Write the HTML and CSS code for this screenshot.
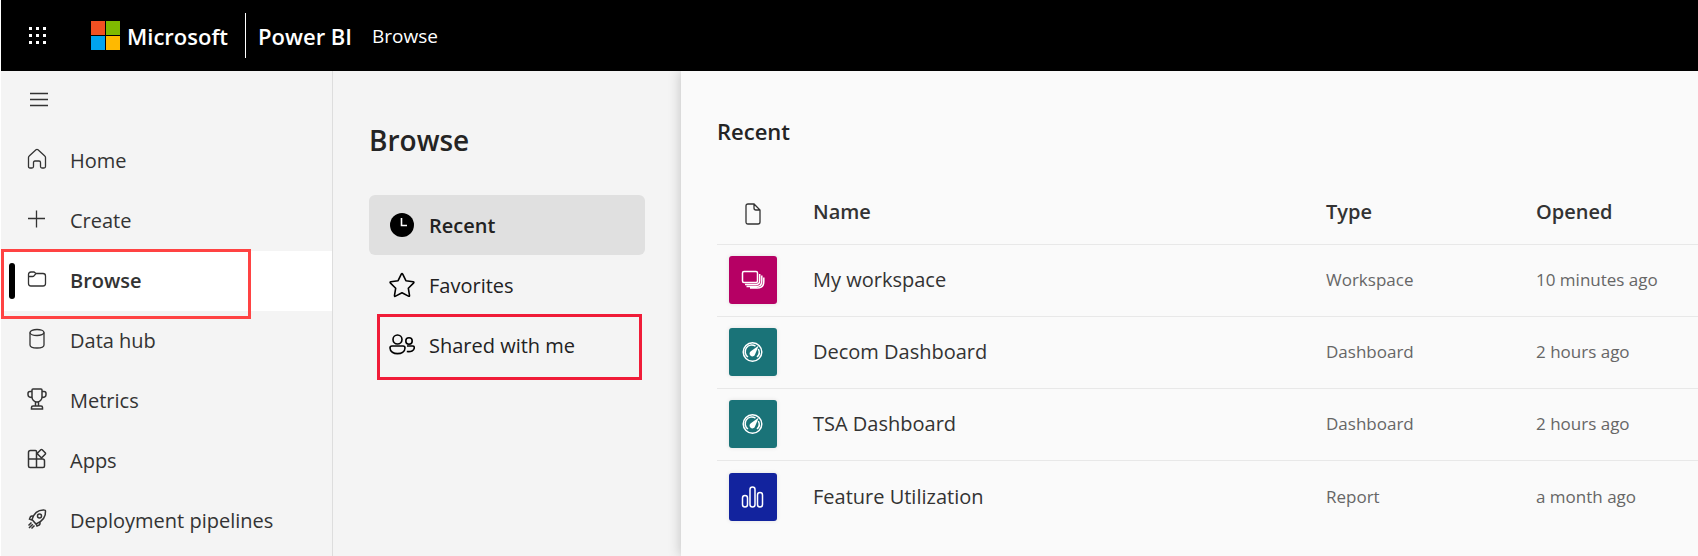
FILE: index.html
```
<!DOCTYPE html>
<html lang="en">
<head>
<meta charset="utf-8">
<title>Power BI</title>
<link rel="stylesheet" href="styles.css">
</head>
<body>
<header class="topbar">
  <button class="icon-button launcher" aria-label="App launcher">
    <svg width="20" height="20" viewBox="0 0 20 20"><path fill="#fff" d="M1 1h3v3H1zM8 1h3v3H8zM15 1h3v3h-3zM1 8h3v3H1zM8 8h3v3H8zM15 8h3v3h-3zM1 15h3v3H1zM8 15h3v3H8zM15 15h3v3h-3z"/></svg>
  </button>
  <a class="brand" href="#">
    <svg width="29" height="29" viewBox="0 0 29 29"><path fill="#f25022" d="M0 0h14v14H0z"/><path fill="#7fba00" d="M15 0h14v14H15z"/><path fill="#00a4ef" d="M0 15h14v14H0z"/><path fill="#ffb900" d="M15 15h14v14H15z"/></svg>
    <span>Microsoft</span>
  </a>
  <a class="product" href="#">Power BI</a>
  <span class="section">Browse</span>
</header>
<div class="layout">
  <nav class="sidebar" aria-label="Main">
    <button class="icon-button menu" aria-label="Toggle navigation">
      <svg width="20" height="20" viewBox="0 0 20 20"><path d="M1 3.500h18M1 9.500h18M1 15.500h18"/></svg>
    </button>
    <a class="nav-item" href="#"><svg viewBox="0 0 20 22"><path d="M1.500 9.500q0-1 .7-1.600L9 1.800q1-.9 2 0l6.800 6.100q.7.600.7 1.600v9q0 1.500-1.500 1.500h-2q-1.500 0-1.500-1.500v-4q0-1.500-1.500-1.500H8q-1.500 0-1.500 1.500v4q0 1.500-1.500 1.500H3q-1.500 0-1.500-1.500z"/></svg>Home</a>
    <a class="nav-item" href="#"><svg viewBox="0 0 20 22"><path d="M9.500 2.500v17M1 10.500h17"/></svg>Create</a>
    <a class="nav-item current" href="#" aria-current="page"><svg viewBox="0 0 20 22"><path d="M1.500 6.500v9q0 2.500 2.500 2.500h12q2.500 0 2.500-2.500V8q0-2.500-2.500-2.500H9L7 4H4Q1.500 4 1.500 6.500zM1.500 8.500h4q1 0 1.500-.7L9 5.500"/></svg>Browse</a>
    <a class="nav-item" href="#"><svg viewBox="0 0 20 22"><ellipse cx="10" cy="4.500" rx="7" ry="3"/><path d="M3 4.500v12.500c0 4 14 4 14 0V4.500"/></svg>Data hub</a>
    <a class="nav-item" href="#"><svg class="bold" viewBox="0 0 20 22"><path d="M5 2q0-1 1-1h8q1 0 1 1v7a5 5 0 0 1-10 0zM5 3.500H3Q1 3.500 1 5.500v1q0 3 4 3M15 3.500h2q2 0 2 2v1q0 3-4 3M8.500 14v4M11.500 14v4M4.500 21v-1.500q0-1.500 1.500-1.500h8q1.500 0 1.500 1.500V21z"/></svg>Metrics</a>
    <a class="nav-item" href="#"><svg class="bold" viewBox="0 0 20 22"><path d="M9.500 11V3.500q0-1-1-1h-5q-2 0-2 2v13.500q0 1.500 1.500 1.500h13q1.500 0 1.500-1.500v-5q0-2-2-2zM1.500 11h8v8.500M13.800 1.800q.7-.7 1.400 0l3 3q.7.700 0 1.400l-3 3q-.7.700-1.400 0l-3-3q-.7-.7 0-1.400z"/></svg>Apps</a>
    <a class="nav-item" href="#"><svg class="bold" viewBox="0 0 20 22"><path d="M5 11.500C7 5 11 1.500 17.500 2q1 0 1 1C19 9.500 15 13.500 9 16zM6.500 8H5q-1 0-1.500.7L2.500 11 5 12M13 14v1.500q0 1-.8 1.500L10 18l-1-2.500M4.500 14.500l-3 3M5.800 16.200l-3.800 3.800M7.500 17.500l-3 3"/><circle cx="12.500" cy="8" r="2"/></svg>Deployment pipelines</a>
  </nav>
  <section class="browse">
    <h1>Browse</h1>
    <nav class="views" aria-label="Browse">
      <a class="view selected" href="#" aria-current="page"><svg viewBox="0 0 26 26"><circle cx="13" cy="13" r="12" fill="#000" stroke="none"/><path stroke="#fff" d="M12.500 6v7.500H18"/></svg>Recent</a>
      <a class="view" href="#"><svg viewBox="0 0 26 26"><path stroke-linejoin="round" d="M12.300 2.100q.7-1.300 1.400 0l3.200 6.600 7.200 1.100q1.400.2.400 1.300l-5.200 5.100 1.200 7.100q.2 1.500-1.100.8L13 20.800l-6.400 3.300q-1.300.7-1.100-.8l1.200-7.100-5.200-5.100q-1-1.100.4-1.300l7.200-1.100z"/></svg>Favorites</a>
      <a class="view marked" href="#"><svg viewBox="0 0 26 26"><circle cx="8.500" cy="7.500" r="4.500"/><circle cx="20" cy="9" r="3.200"/><path d="M3 14h11q2 0 2 2c0 7.500-15 7.500-15 0q0-2 2-2zM18 14h5.500q1.800 0 1.800 1.500c0 3.500-3.500 4.500-7.500 4"/></svg>Shared with me</a>
    </nav>
  </section>
  <main class="content">
    <h2>Recent</h2>
    <table class="items">
      <thead>
        <tr>
          <th class="col-icon" scope="col"><svg class="file" role="img" aria-label="Item" viewBox="0 0 16 22"><path d="M3 1h6l6 6v12q0 2-2 2H3q-2 0-2-2V3q0-2 2-2zM9 1v4q0 2 2 2h4"/></svg></th>
          <th scope="col">Name</th><th class="col-type" scope="col">Type</th><th class="col-opened" scope="col">Opened</th>
        </tr>
      </thead>
      <tbody>
        <tr><td><span class="tile workspace"><svg viewBox="0 0 24 24"><rect x="1.500" y="3.500" width="15" height="11" rx="1.500"/><path d="M18.700 6v6.500q0 4-4 4H4M20.800 7.500v5.500q0 5.500-5.500 5.500H5.500M22.800 9.500v4q0 6.500-6.500 6.500H9"/></svg></span></td><td><a href="#">My workspace</a></td><td>Workspace</td><td>10 minutes ago</td></tr>
        <tr><td><span class="tile dashboard"><svg viewBox="0 0 24 24"><circle cx="11.500" cy="12" r="9.300"/><path d="M7 17A6.500 6.500 0 0 1 14.500 6.200M17.300 9A6.500 6.500 0 0 1 16 17"/><path fill="#fff" stroke="none" d="M17.800 5.500L14 14.500a2.800 2.800 0 1 1-4.200-3.200z"/></svg></span></td><td><a href="#">Decom Dashboard</a></td><td>Dashboard</td><td>2 hours ago</td></tr>
        <tr><td><span class="tile dashboard"><svg viewBox="0 0 24 24"><circle cx="11.500" cy="12" r="9.300"/><path d="M7 17A6.500 6.500 0 0 1 14.500 6.200M17.300 9A6.500 6.500 0 0 1 16 17"/><path fill="#fff" stroke="none" d="M17.800 5.500L14 14.500a2.800 2.800 0 1 1-4.200-3.200z"/></svg></span></td><td><a href="#">TSA Dashboard</a></td><td>Dashboard</td><td>2 hours ago</td></tr>
        <tr><td><span class="tile report"><svg viewBox="0 0 24 24"><rect x="1.500" y="10.500" width="5" height="11.500" rx="2.500"/><rect x="9" y="2" width="5" height="20" rx="2.500"/><rect x="16.500" y="7.500" width="5" height="14.500" rx="2.500"/></svg></span></td><td><a href="#">Feature Utilization</a></td><td>Report</td><td>a month ago</td></tr>
      </tbody>
    </table>
  </main>
</div>
</body>
</html>
```
FILE: styles.css
```
*, *::before, *::after { box-sizing: border-box; }
body { margin: 0; display: flex; flex-direction: column; min-height: 100vh; border-left: 1px solid #fff; background: #f4f4f4; color: #333; font: 20px/28px "Segoe UI", "Open Sans", "Noto Sans", sans-serif; }
a { color: inherit; text-decoration: none; }
svg { display: block; flex: none; fill: none; stroke: currentColor; stroke-width: 1.3; }
.topbar { display: flex; align-items: center; height: 71px; padding-left: 27px; background: #000; color: #fff; }
.topbar svg { stroke: none; }
.icon-button { display: block; padding: 0; border: 0; background: none; color: #333; }
.brand { display: flex; align-items: center; gap: 7px; margin-left: 43px; font-size: 22px; font-weight: 600; }
.product { display: flex; align-items: center; height: 45px; margin-left: 17px; padding-left: 12px; border-left: 1px solid #fff; font-size: 22px; font-weight: 600; }
.section { margin-left: 20px; font-size: 19px; }
.layout { display: flex; flex: 1; }
.sidebar { flex: none; width: 332px; border-right: 1px solid #ddd; }
.menu { margin: 19px 0 21px 28px; }
.nav-item { display: flex; align-items: center; gap: 23px; height: 60px; padding-left: 26px; }
.nav-item svg { width: 20px; height: 22px; margin-bottom: 4px; }
.bold { stroke-width: 1.5; }
.current { position: relative; background: #fff; font-weight: 600; }
.current::before { content: ""; position: absolute; left: 8px; top: 12px; width: 6px; height: 36px; border-radius: 3px; background: #000; }
.current::after { content: ""; position: absolute; left: 0; top: -2px; width: 250px; height: 70px; border: 3px solid #ff4343; }
.browse { flex: none; width: 348px; padding: 49px 36px 0; color: #222; }
h1, h2 { margin: 0; font-weight: 600; color: #242424; }
h1 { font-size: 28px; line-height: 40px; }
.views { margin-top: 35px; }
.view { display: flex; align-items: center; gap: 14px; height: 60px; padding: 2px 0 0 20px; border-radius: 6px; }
.view svg { width: 26px; height: 26px; margin-bottom: 2px; color: #000; stroke-width: 1.6; }
.selected { background: #e0e0e0; font-weight: 600; }
.marked { position: relative; }
.marked::after { content: ""; position: absolute; left: 8px; top: -1px; width: 265px; height: 66px; border: 3px solid #f01c38; }
.content { flex: 1; min-width: 0; padding: 42px 0 0 36px; background: #fafafa; box-shadow: 0 0 12px rgba(0, 0, 0, .22); clip-path: inset(0 0 0 -16px); }
h2 { font-size: 22px; line-height: 36px; }
.items { width: 100%; margin-top: 31px; border-collapse: collapse; table-layout: fixed; }
.items th, .items td { padding: 0; text-align: left; }
.items th { height: 64px; font-weight: 600; }
.items td { height: 72px; font-size: 17px; color: #666; }
.items tbody tr { border-top: 1px solid #e8e8e8; }
.items tbody tr:last-child td { height: 74px; }
.items td a { font-size: 20px; color: #333; }
.col-icon { width: 96px; }
.col-type { width: 210px; }
.col-opened { width: 162px; }
.file { width: 16px; height: 22px; margin: 4px 0 0 28px; }
.tile { display: flex; align-items: center; justify-content: center; width: 48px; height: 48px; margin-left: 12px; border-radius: 3px; color: #fff; box-shadow: 0 0 4px rgba(0, 0, 0, .1); }
.tile svg { width: 24px; height: 24px; stroke-width: 1.5; }
.workspace { background: #b60064; }
.dashboard { background: #1a7378; }
.report { background: #12239e; }
```
